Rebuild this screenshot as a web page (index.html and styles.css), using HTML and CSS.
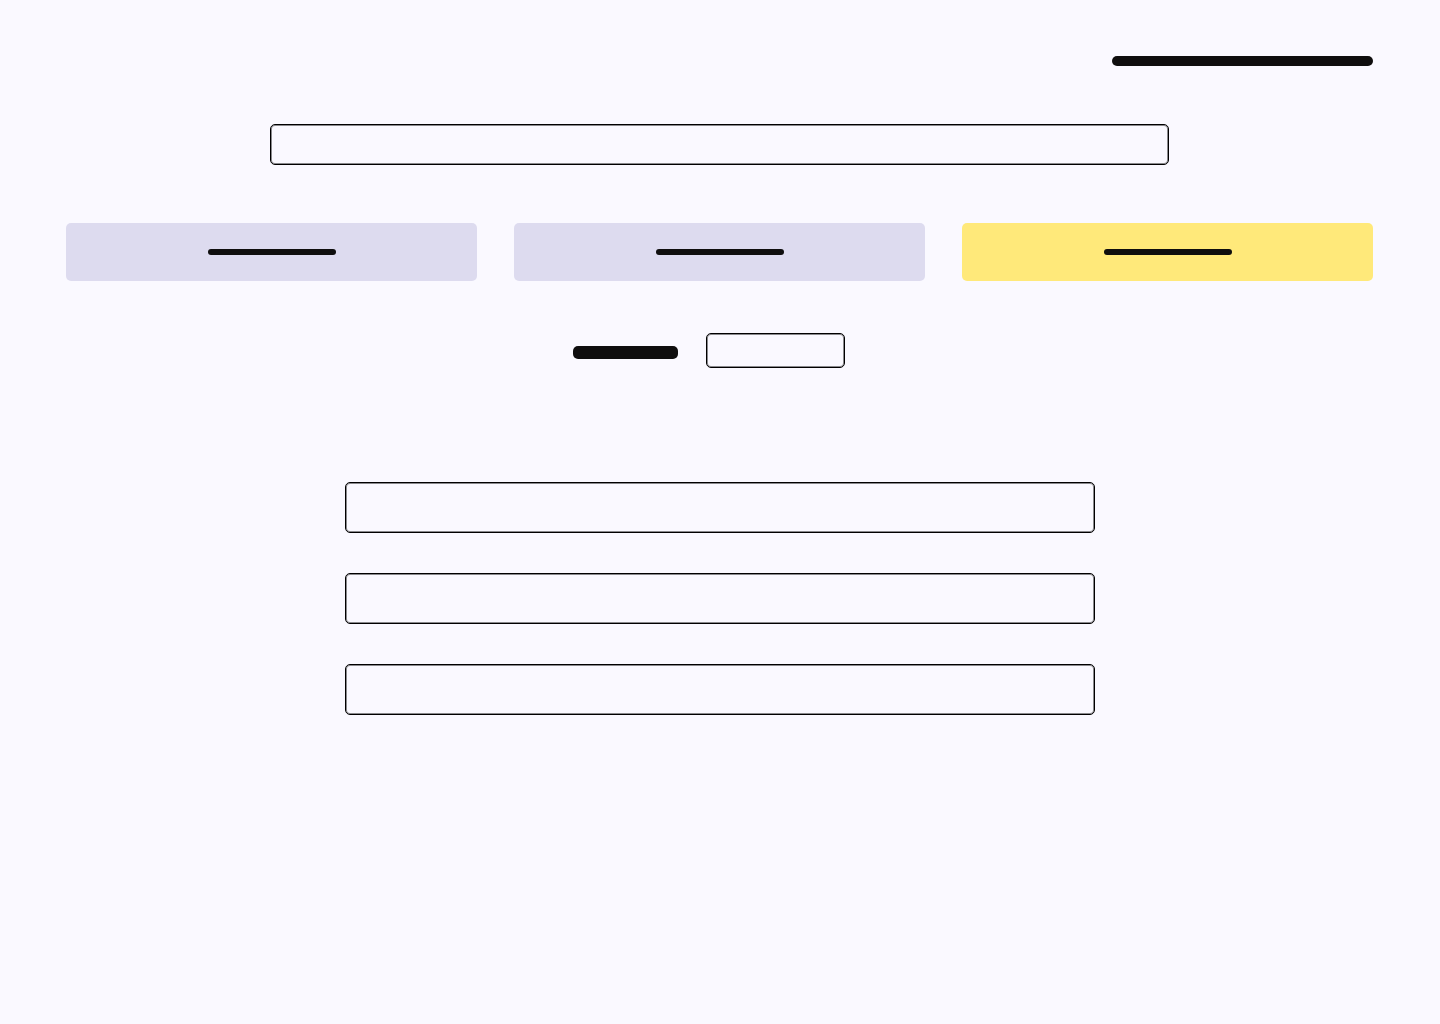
FILE: index.html
```html
<!DOCTYPE html>
<html lang="en">
<head>
  <meta charset="utf-8">
  <meta name="viewport" content="width=device-width, initial-scale=1">
  <title>Search</title>
  <link rel="stylesheet" href="styles.css">
</head>
<body>
  <main class="page">
    <header class="topbar">
      <a class="bar bar-account" href="#" aria-label="Account"></a>
    </header>

    <input class="field search" type="search" aria-label="Search">

    <nav class="tabs" aria-label="Categories">
      <button class="tab" type="button" aria-label="First category"><span class="bar bar-tab"></span></button>
      <button class="tab" type="button" aria-label="Second category"><span class="bar bar-tab"></span></button>
      <button class="tab tab-active" type="button" aria-label="Third category" aria-current="true"><span class="bar bar-tab"></span></button>
    </nav>

    <div class="filter">
      <label class="bar bar-label" for="filter" aria-label="Filter"></label>
      <input class="field filter-field" id="filter" type="text" aria-label="Filter">
    </div>

    <ul class="results">
      <li class="field result"></li>
      <li class="field result"></li>
      <li class="field result"></li>
    </ul>
  </main>
</body>
</html>
```
FILE: styles.css
```css
* {
  box-sizing: border-box;
}

body {
  margin: 0;
  background: #faf9ff;
  font-family: Inter, sans-serif;
  font-size: 16px;
}

.page {
  display: flex;
  flex-direction: column;
  align-items: center;
  padding: 56px 67px 56px 66px;
}

.bar {
  display: block;
  background: #0f0e0e;
  border-radius: 5px;
}

/* Outline with a softer inner edge */
.field {
  background: transparent;
  border: 1px solid #000;
  border-radius: 5px;
  box-shadow: inset 0 0 0 1px rgba(0, 0, 0, 0.45);
  appearance: none;
}

.topbar {
  display: flex;
  justify-content: flex-end;
  width: 100%;
}

.bar-account {
  width: 261px;
  height: 10px;
}

.search {
  width: 100%;
  max-width: 899px;
  height: 41px;
  margin: 58px 0;
  padding: 0 12px;
  font: inherit;
}

.tabs {
  display: grid;
  grid-template-columns: repeat(3, 1fr);
  gap: 37px;
  width: 100%;
}

.tab {
  display: flex;
  align-items: center;
  justify-content: center;
  height: 58px;
  padding: 0;
  background: #dddbef;
  border: 0;
  border-radius: 5px;
}

.tab-active {
  background: #ffe97a;
}

.bar-tab {
  width: 128px;
  height: 6px;
  border-radius: 3px;
}

.filter {
  display: flex;
  align-items: center;
  gap: 28px;
  margin-top: 52px;
  padding-right: 21px;
}

.bar-label {
  width: 105px;
  height: 13px;
  margin-top: 4px;
}

.filter-field {
  width: 139px;
  height: 35px;
  padding: 0 12px;
  font: inherit;
}

.results {
  display: flex;
  flex-direction: column;
  gap: 40px;
  width: 100%;
  max-width: 750px;
  margin: 114px 0 0;
  padding: 0;
  list-style: none;
}

.result {
  min-height: 51px;
}
```
